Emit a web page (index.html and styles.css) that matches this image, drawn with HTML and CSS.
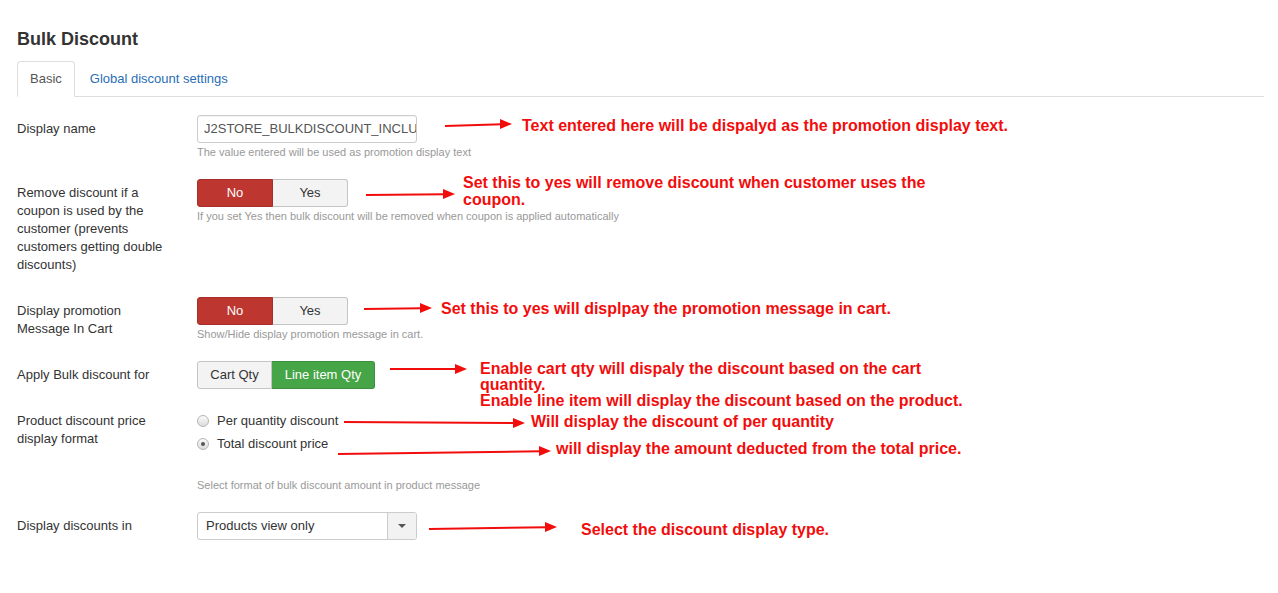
FILE: index.html
```html
<!DOCTYPE html>
<html>
<head>
<meta charset="utf-8">
<link rel="stylesheet" href="styles.css">
</head>
<body>
<div class="page">
  <h1 class="title">Bulk Discount</h1>
  <ul class="tabs">
    <li class="tab active"><a>Basic</a></li>
    <li class="tab"><a class="link">Global discount settings</a></li>
  </ul>

  <form class="form">
    <div class="group">
      <label class="label">Display name</label>
      <div class="controls">
        <div class="input">J2STORE_BULKDISCOUNT_INCLUDED</div>
        <div class="help">The value entered will be used as promotion display text</div>
      </div>
    </div>

    <div class="group">
      <label class="label">Remove discount if a coupon is used by the customer (prevents customers getting double discounts)</label>
      <div class="controls">
        <div class="btn-group">
          <span class="btn btn-no danger">No</span><span class="btn btn-yes">Yes</span>
        </div>
        <div class="help">If you set Yes then bulk discount will be removed when coupon is applied automatically</div>
      </div>
    </div>

    <div class="group">
      <label class="label">Display promotion Message In Cart</label>
      <div class="controls">
        <div class="btn-group">
          <span class="btn btn-no danger">No</span><span class="btn btn-yes">Yes</span>
        </div>
        <div class="help">Show/Hide display promotion message in cart.</div>
      </div>
    </div>

    <div class="group">
      <label class="label">Apply Bulk discount for</label>
      <div class="controls">
        <div class="btn-group">
          <span class="btn btn-cart">Cart Qty</span><span class="btn btn-line success">Line item Qty</span>
        </div>
      </div>
    </div>

    <div class="group">
      <label class="label">Product discount price display format</label>
      <div class="controls">
        <div class="radios">
          <div class="radio"><span class="dot"></span><span>Per quantity discount</span></div>
          <div class="radio"><span class="dot checked"></span><span>Total discount price</span></div>
        </div>
        <div class="help help-radio">Select format of bulk discount amount in product message</div>
      </div>
    </div>

    <div class="group">
      <label class="label">Display discounts in</label>
      <div class="controls">
        <div class="select">
          <span class="select-text">Products view only</span>
          <span class="select-arrow"><span class="caret"></span></span>
        </div>
      </div>
    </div>
  </form>
</div>

<div class="notes">
  <svg class="arrows" width="1278" height="593" viewBox="0 0 1278 593">
    <g stroke="#f20d0d" stroke-width="2" fill="none">
      <line x1="445" y1="126" x2="502" y2="124.3"/>
      <line x1="366" y1="195" x2="445" y2="194.2"/>
      <line x1="364" y1="309" x2="422" y2="308.2"/>
      <line x1="390" y1="369" x2="457" y2="369"/>
      <line x1="344" y1="422" x2="515" y2="423"/>
      <line x1="338" y1="454" x2="541" y2="451.2"/>
      <line x1="429" y1="529" x2="547" y2="527.2"/>
    </g>
    <g fill="#f20d0d">
      <polygon points="512,124 500,119 500,129"/>
      <polygon points="455,194 443,189 443,199"/>
      <polygon points="432,308 420,303 420,313"/>
      <polygon points="467,369 455,364 455,374"/>
      <polygon points="525,423 513,418 513,428"/>
      <polygon points="551,451 539,446 539,456"/>
      <polygon points="557,527 545,522 545,532"/>
    </g>
  </svg>
  <div class="note n1">Text entered here will be dispalyd as the promotion display text.</div>
  <div class="note n2">Set this to yes will remove discount when customer uses the<br>coupon.</div>
  <div class="note n3">Set this to yes will displpay the promotion message in cart.</div>
  <div class="note n4">Enable cart qty will dispaly the discount based on the cart<br>quantity.<br>Enable line item will display the discount based on the product.</div>
  <div class="note n5">Will display the discount of per quantity</div>
  <div class="note n6">will display the amount deducted from the total price.</div>
  <div class="note n7">Select the discount display type.</div>
</div>
</body>
</html>
```

FILE: styles.css
```css
* { box-sizing: border-box; }

html, body {
  margin: 0;
  padding: 0;
  background: #ffffff;
}

body {
  font-family: "Liberation Sans", Arial, Helvetica, sans-serif;
  font-size: 13px;
  line-height: 18px;
  color: #333333;
  position: relative;
  width: 1278px;
  height: 593px;
  overflow: hidden;
}

.page {
  padding: 28px 14px 0 17px;
}

.title {
  margin: 0 0 11px 0;
  font-size: 18px;
  line-height: 22px;
  font-weight: bold;
  color: #333333;
}

.tabs {
  list-style: none;
  margin: 0 0 18px 0;
  padding: 0;
  display: flex;
  border-bottom: 1px solid #dddddd;
}

.tab {
  margin-right: 2px;
  margin-bottom: -1px;
}

.tab a {
  display: block;
  padding: 8px 12px;
  line-height: 18px;
  border: 1px solid transparent;
  border-radius: 4px 4px 0 0;
}

.tab.active a {
  color: #555555;
  background: #ffffff;
  border-color: #dddddd #dddddd transparent #dddddd;
}

.link {
  color: #2a6eb6;
}

.form {
  margin: 0;
}

.group {
  display: flex;
  margin-bottom: 18px;
}

.label {
  flex: none;
  width: 180px;
  padding: 5px 20px 5px 0;
  line-height: 18px;
  color: #333333;
}

.controls {
  flex: 1;
}

.help {
  font-size: 11px;
  line-height: 18px;
  color: #999999;
}

.help-radio {
  margin-top: 23px;
}

.input {
  width: 220px;
  height: 28px;
  border: 1px solid #cccccc;
  border-radius: 3px;
  padding: 0 6px;
  line-height: 26px;
  color: #555555;
  white-space: nowrap;
  overflow: hidden;
  box-shadow: inset 0 1px 1px rgba(0,0,0,0.05);
}

.btn-group {
  display: flex;
}

.btn {
  display: block;
  height: 28px;
  line-height: 26px;
  text-align: center;
  border: 1px solid #c4c4c4;
  background: #f3f3f3;
  color: #333333;
}

.btn-group .btn:first-child {
  border-radius: 3px 0 0 3px;
}

.btn-group .btn:last-child {
  border-radius: 0 3px 3px 0;
  border-left: none;
}

.btn-no { width: 76px; }
.btn-yes { width: 75px; }
.btn-cart { width: 75px; }
.btn-line { width: 103px; }

.btn.danger {
  background: #bd362f;
  border-color: #a5302a;
  color: #ffffff;
}

.btn.success {
  background: #46a546;
  border-color: #3d8f3d;
  color: #ffffff;
}

.radios {
  padding-top: 5px;
}

.radio {
  display: flex;
  align-items: center;
  line-height: 18px;
  margin-bottom: 5px;
}

.radio:last-child {
  margin-bottom: 0;
}

.dot {
  flex: none;
  width: 12px;
  height: 12px;
  margin: 0 8px 0 0;
  border-radius: 50%;
  border: 1px solid #b5b5b5;
  background: linear-gradient(#fafafa, #dcdcdc);
  position: relative;
}

.dot.checked::after {
  content: "";
  position: absolute;
  left: 3px;
  top: 3px;
  width: 4px;
  height: 4px;
  border-radius: 50%;
  background: #555555;
}

.select {
  display: flex;
  width: 220px;
  height: 28px;
  border: 1px solid #cccccc;
  border-radius: 3px;
  overflow: hidden;
}

.select-text {
  flex: 1;
  padding-left: 8px;
  line-height: 26px;
  color: #333333;
}

.select-arrow {
  flex: none;
  width: 29px;
  border-left: 1px solid #cccccc;
  background: #f2f2f2;
  display: flex;
  align-items: center;
  justify-content: center;
}

.caret {
  width: 0;
  height: 0;
  border-left: 4px solid transparent;
  border-right: 4px solid transparent;
  border-top: 4px solid #555555;
}

.notes {
  position: absolute;
  left: 0;
  top: 0;
  width: 1278px;
  height: 593px;
  pointer-events: none;
}

.arrows {
  position: absolute;
  left: 0;
  top: 0;
}

.note {
  position: absolute;
  font-family: "Liberation Sans", Arial, Helvetica, sans-serif;
  font-size: 16px;
  font-weight: bold;
  line-height: 17px;
  color: #f20d0d;
  white-space: nowrap;
}

.n1 { left: 522px; top: 117px; }
.n2 { left: 463px; top: 174px; }
.n3 { left: 441px; top: 300px; }
.n4 { left: 480px; top: 361px; line-height: 16px; }
.n5 { left: 531px; top: 413px; }
.n6 { left: 556px; top: 440px; }
.n7 { left: 581px; top: 521px; }
```
